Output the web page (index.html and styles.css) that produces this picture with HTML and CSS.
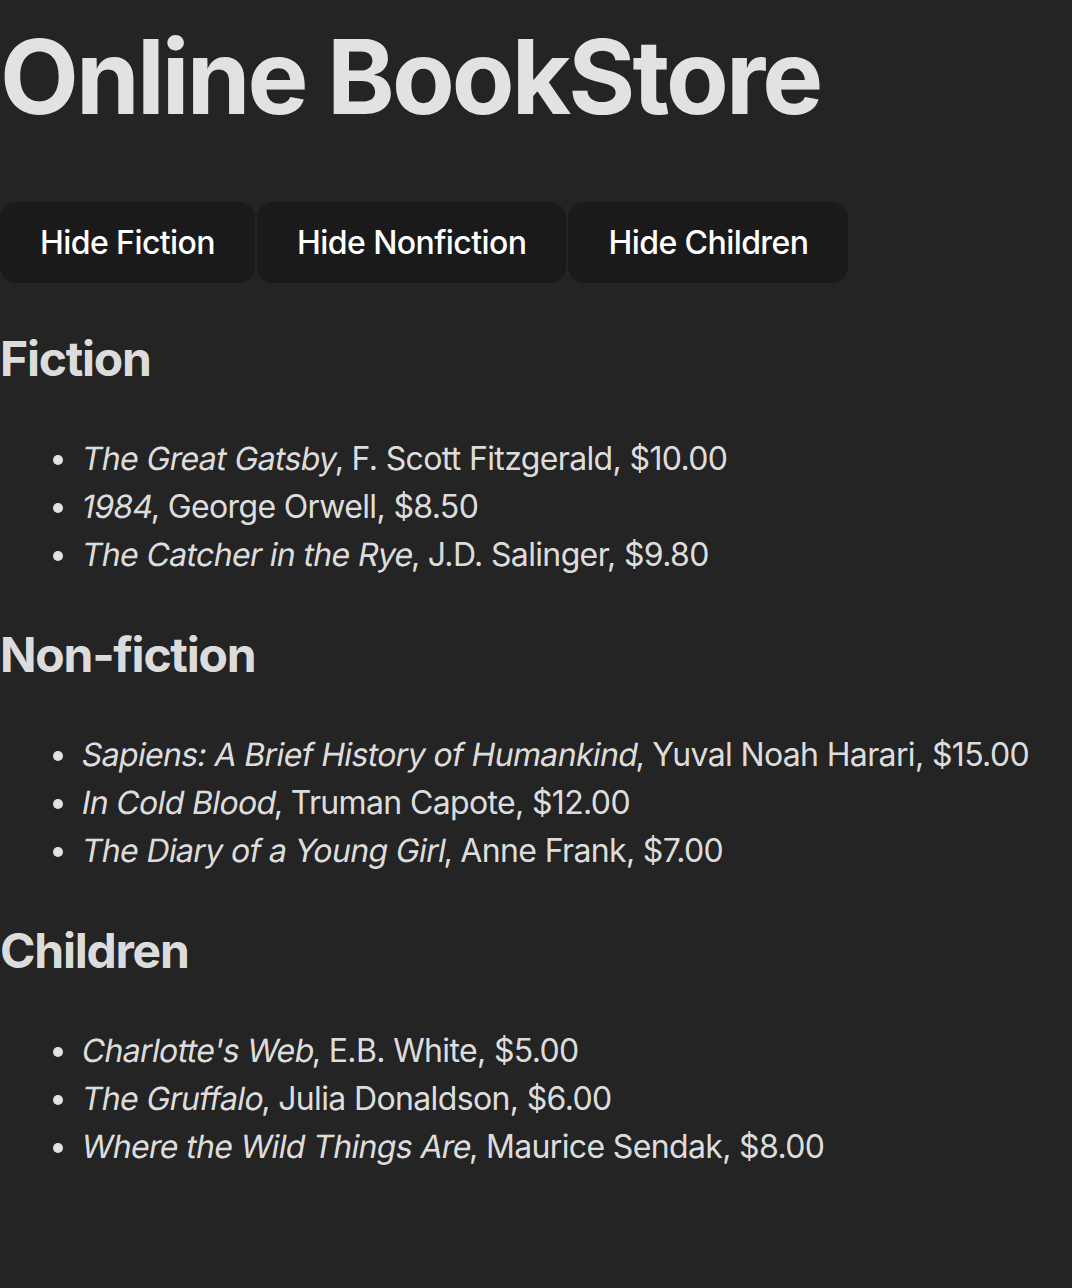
FILE: index.html
```html
<!DOCTYPE html>
<html lang="en">
<head>
<meta charset="utf-8">
<title>Online BookStore</title>
<link rel="stylesheet" href="styles.css">
</head>
<body>
<div class="app">
  <h1 class="title">Online BookStore</h1>
  <div class="buttons"><button class="btn">Hide Fiction</button><button class="btn">Hide Nonfiction</button><button class="btn">Hide Children</button></div>
  <h2 class="cat">Fiction</h2>
  <ul class="books">
    <li><em>The Great Gatsby</em>, F. Scott Fitzgerald, $10.00</li>
    <li><em>1984</em>, George Orwell, $8.50</li>
    <li><em>The Catcher in the Rye</em>, J.D. Salinger, $9.80</li>
  </ul>
  <h2 class="cat">Non-fiction</h2>
  <ul class="books">
    <li><em>Sapiens: A Brief History of Humankind</em>, Yuval Noah Harari, $15.00</li>
    <li><em>In Cold Blood</em>, Truman Capote, $12.00</li>
    <li><em>The Diary of a Young Girl</em>, Anne Frank, $7.00</li>
  </ul>
  <h2 class="cat">Children</h2>
  <ul class="books">
    <li><em>Charlotte's Web</em>, E.B. White, $5.00</li>
    <li><em>The Gruffalo</em>, Julia Donaldson, $6.00</li>
    <li><em>Where the Wild Things Are</em>, Maurice Sendak, $8.00</li>
  </ul>
</div>
</body>
</html>
```
FILE: styles.css
```css
html {
  background: #242424;
  color-scheme: dark;
}
body {
  margin: 0;
  font-family: Inter, "Noto Sans", sans-serif;
  font-size: 32px;
  line-height: 1.5;
  font-weight: 400;
  color: rgba(255, 255, 255, 0.87);
  background: #242424;
  min-height: 1288px;
}
.title {
  font-size: 102.4px;
  line-height: 1.1;
  font-weight: 700;
  letter-spacing: -0.028em;
  margin: 21px 0 68px;
}
.buttons {
  display: flex;
  gap: 2px;
}
.btn {
  font-family: inherit;
  font-size: 32px;
  font-weight: 500;
  line-height: normal;
  letter-spacing: -0.018em;
  color: #ffffff;
  background: #1a1a1a;
  border: 2px solid transparent;
  border-radius: 16px;
  padding: 19.2px 38px;
  cursor: pointer;
}
.cat {
  font-size: 48px;
  font-weight: 700;
  letter-spacing: -0.026em;
  margin: 40px 0;
}
.books {
  margin: 40px 0;
  padding-left: 80px;
  letter-spacing: -0.02em;
}
.books em {
  font-style: normal;
  display: inline-block;
  transform-origin: 0 76%;
  transform: skewX(-10deg);
}
```
